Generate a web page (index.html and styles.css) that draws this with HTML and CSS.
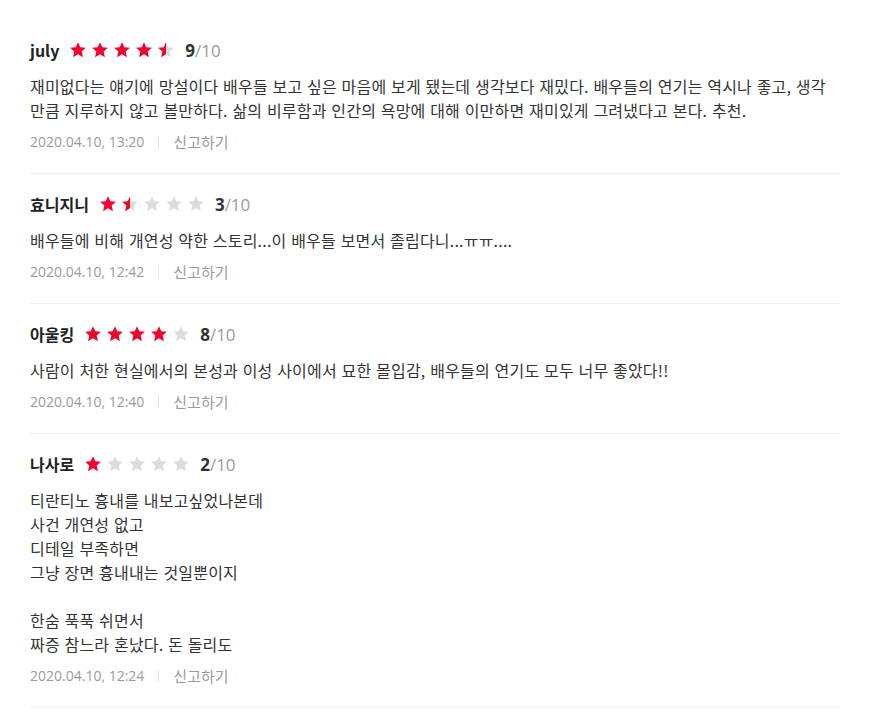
FILE: index.html
```html
<!DOCTYPE html>
<html lang="ko">
<head>
  <meta charset="UTF-8">
  <meta name="viewport" content="width=device-width, initial-scale=1.0">
  <title>관람평</title>
  <link rel="stylesheet" href="styles.css">
</head>
<body>
  <!-- 반쪽 별 그라데이션 -->
  <svg class="defs" width="0" height="0" aria-hidden="true">
    <defs>
      <linearGradient id="halfStar" x1="0" x2="1" y1="0" y2="0">
        <stop offset="50%" stop-color="#f0042d"/>
        <stop offset="50%" stop-color="#dcdcdc"/>
      </linearGradient>
    </defs>
  </svg>

  <ul class="review-list">
    <li class="review">
      <div class="review-head">
        <strong class="nick">july</strong>
        <span class="stars" data-score="9"></span>
        <span class="score"><b>9</b>/10</span>
      </div>
      <p class="review-text">재미없다는 얘기에 망설이다 배우들 보고 싶은 마음에 보게 됐는데 생각보다 재밌다. 배우들의 연기는 역시나 좋고, 생각만큼 지루하지 않고 볼만하다. 삶의 비루함과 인간의 욕망에 대해 이만하면 재미있게 그려냈다고 본다. 추천.</p>
      <div class="review-meta">
        <span class="date">2020.04.10, 13:20</span>
        <a class="report" href="#">신고하기</a>
      </div>
    </li>
    <li class="review">
      <div class="review-head">
        <strong class="nick">효니지니</strong>
        <span class="stars" data-score="3"></span>
        <span class="score"><b>3</b>/10</span>
      </div>
      <p class="review-text">배우들에 비해 개연성 약한 스토리...이 배우들 보면서 졸립다니...ㅠㅠ....</p>
      <div class="review-meta">
        <span class="date">2020.04.10, 12:42</span>
        <a class="report" href="#">신고하기</a>
      </div>
    </li>
    <li class="review">
      <div class="review-head">
        <strong class="nick">아울킹</strong>
        <span class="stars" data-score="8"></span>
        <span class="score"><b>8</b>/10</span>
      </div>
      <p class="review-text">사람이 처한 현실에서의 본성과 이성 사이에서 묘한 몰입감, 배우들의 연기도 모두 너무 좋았다!!</p>
      <div class="review-meta">
        <span class="date">2020.04.10, 12:40</span>
        <a class="report" href="#">신고하기</a>
      </div>
    </li>
    <li class="review">
      <div class="review-head">
        <strong class="nick">나사로</strong>
        <span class="stars" data-score="2"></span>
        <span class="score"><b>2</b>/10</span>
      </div>
      <p class="review-text">티란티노 흉내를 내보고싶었나본데
사건 개연성 없고
디테일 부족하면
그냥 장면 흉내내는 것일뿐이지

한숨 푹푹 쉬면서
짜증 참느라 혼났다. 돈 돌리도</p>
      <div class="review-meta">
        <span class="date">2020.04.10, 12:24</span>
        <a class="report" href="#">신고하기</a>
      </div>
    </li>
  </ul>

  <script>
    // 별점 그리기 (10점 만점 -> 별 5개)
    const starPath = 'M12 1.5l3.1 6.9 7.4.7-5.6 5 1.7 7.4L12 17.6l-6.6 3.9 1.7-7.4-5.6-5 7.4-.7z';

    document.querySelectorAll('.stars').forEach(function (box) {
      const score = Number(box.dataset.score);
      let html = '';
      for (let i = 1; i <= 5; i++) {
        let cls = 'off';
        if (score >= i * 2) cls = 'on';
        else if (score === i * 2 - 1) cls = 'half';
        html += `<svg class="star ${cls}" viewBox="0 0 24 24"><path d="${starPath}"/></svg>`;
      }
      box.innerHTML = html;
    });
  </script>
</body>
</html>
```

FILE: styles.css
```css
:root {
  --text: #333333;
  --muted: #9a9a9a;
  --line: #f0f0f0;
  --red: #f0042d;
  --star-off: #dcdcdc;
}

body {
  margin: 0;
  font-family: "Open Sans", "Noto Sans CJK KR", sans-serif;
  color: var(--text);
  background: #ffffff;
}

.defs {
  position: absolute;
}

.review-list {
  list-style: none;
  margin: 20px 36px 0 30px;
  padding: 0;
}

.review {
  padding: 19px 0 21px;
  border-bottom: 1px solid var(--line);
}

.review-head {
  display: flex;
  align-items: center;
  height: 22px;
}

.nick {
  font-family: "Noto Sans CJK KR", sans-serif;
  font-size: 16px;
  font-weight: 700;
  color: #222;
  margin-right: 10px;
}

.stars {
  display: flex;
  gap: 4px;
  margin-right: 10px;
}

.star {
  width: 18px;
  height: 18px;
  display: block;
}

.star.on { fill: var(--red); }
.star.off { fill: var(--star-off); }
.star.half { fill: url(#halfStar); }

.score {
  font-size: 17px;
  color: #999;
}

.score b {
  color: #333;
  font-weight: 700;
}

.review-text {
  margin: 13px 0 0;
  font-family: "Noto Sans CJK KR", sans-serif;
  font-size: 16px;
  letter-spacing: 0.2px;
  line-height: 24px;
  white-space: pre-line;
}

.review-meta {
  margin-top: 10px;
  display: flex;
  align-items: center;
  font-size: 14px;
  line-height: 20px;
  color: var(--muted);
}

.report {
  color: var(--muted);
  font-size: 15px;
  text-decoration: none;
  margin-left: 14px;
  padding-left: 14px;
  border-left: 1px solid #e6e6e6;
  line-height: 12px;
}
```
